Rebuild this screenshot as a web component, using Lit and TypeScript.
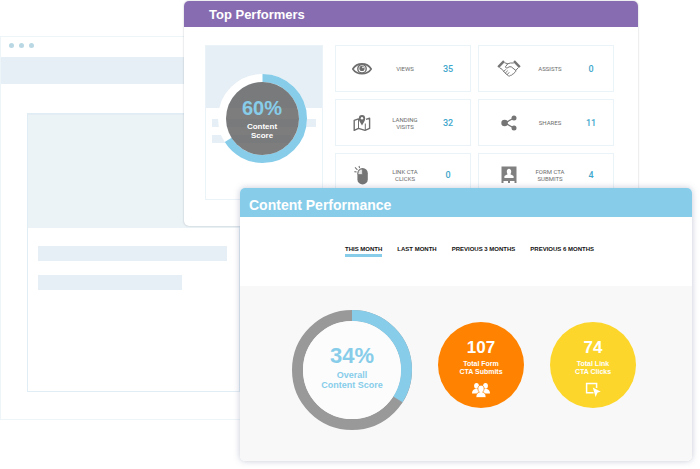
import { LitElement, html, css, svg } from "lit";
import { customElement, property } from "lit/decorators.js";

const icons: Record<string, unknown> = {
  eye: html`<svg width="20" height="14" viewBox="0 0 20 14" aria-hidden="true" fill="none" stroke="#6e6e6e">
    <path d="M0.8 7C5 0.2 15 0.2 19.2 7C15 13.4 5 13.4 0.8 7Z" stroke-width="1.6" />
    <circle cx="10" cy="6.8" r="4.2" stroke-width="1.4" />
    <circle cx="10" cy="6.4" r="2.6" fill="#6e6e6e" stroke="none" />
    <circle cx="11" cy="5.4" r="0.8" fill="#fff" stroke="none" />
  </svg>`,
  map: html`<svg width="18" height="18" viewBox="0 0 18 18" aria-hidden="true" fill="none" stroke="#6e6e6e" stroke-width="1.4">
    <path d="M5.5 4.9L1.2 6.4V16.4L5.5 14.4L12 16.4L16.6 14.4V4.2L13 5.4" stroke-linejoin="round" />
    <path d="M5.5 4.5V14M12.3 9.5V16" stroke-width="1" />
    <path d="M9 11.4C7.4 8.6 5.8 6.8 5.8 4.4A3.2 3.4 0 0 1 12.2 4.4C12.2 6.8 10.6 8.6 9 11.4Z" fill="#6e6e6e" stroke="none" />
    <circle cx="9" cy="4.3" r="1.2" fill="#fff" stroke="none" />
  </svg>`,
  mouse: html`<svg width="18" height="20" viewBox="0 0 18 20" aria-hidden="true">
    <path d="M4.4 10V8.2A5.2 5.2 0 0 1 14.8 8.2V14.4A5.2 5 0 0 1 4.4 14.4Z" fill="#757575" />
    <path d="M9.4 4V9.6H5V8.2A4.6 4.4 0 0 1 9.4 4Z" fill="#e4e4e4" stroke="#757575" stroke-width="0.8" />
    <path d="M1.4 6.6L3.6 7M2 2.4L4.4 4.8M6 1L6.6 3.2" stroke="#757575" stroke-width="1.1" />
  </svg>`,
  hands: html`<svg width="24" height="17" viewBox="0 0 24 17" aria-hidden="true" fill="none" stroke="#757575" stroke-width="1" stroke-linejoin="round" stroke-linecap="round">
    <path d="M1.2 7.2L7 1.2M22.8 7.2L17 1.2" stroke-width="2.4" stroke-linecap="butt" />
    <path d="M3 8L5.2 9.4L7.6 12.6L11.4 15.8C12.4 16.3 13.3 16 13.6 15.2C14.8 15.4 15.6 14.8 15.8 13.8C17 13.8 17.6 13 17.6 12.2C18.6 12 19 11.2 18.8 10.4L21 8" />
    <path d="M7.8 2.8L10.8 3.8L8.4 6.8C8.6 8.4 10.6 8.4 12 6.8L14.2 6.8L18.8 10.4M10.8 3.8L13.4 3L16.4 3" />
    <path d="M6.8 11.4L8.6 9.6M8.4 13L10.4 11M10.2 14.6L12 12.6" />
  </svg>`,
  share: html`<svg width="16" height="16" viewBox="0 0 16 16" aria-hidden="true" fill="#757575">
    <path d="M13 3L4 8L13 13" fill="none" stroke="#757575" stroke-width="1.3" />
    <circle cx="3.6" cy="8" r="3.3" /><circle cx="13" cy="3" r="2.5" /><circle cx="13" cy="13" r="2.5" />
  </svg>`,
  form: html`<svg width="16" height="18" viewBox="0 0 16 18" aria-hidden="true">
    <path d="M0.5 0.5H15.5V17H13.5V15H9V17H7V15H2.5V17H0.5Z" fill="#808080" />
    <path d="M3.4 12V10.2C3.6 9.2 5.6 9 6.6 8.2C5.2 6.4 5.6 2.8 8 2.8C10.4 2.8 10.8 6.4 9.4 8.2C10.4 9 12.4 9.2 12.6 10.2V12Z" fill="#fff" />
  </svg>`,
  people: html`<svg width="18" height="16" viewBox="0 0 18 16" aria-hidden="true" fill="#fff">
    <ellipse cx="4.5" cy="3.8" rx="2.4" ry="2.9" /><ellipse cx="13.5" cy="3.8" rx="2.4" ry="2.9" />
    <path d="M0 11.6C0 8.6 1.2 7.6 3.2 7H5.8L7 8V11.6Z" /><path d="M18 11.6C18 8.6 16.8 7.6 14.8 7H12.2L11 8V11.6Z" />
    <path d="M4 15.5C4 11.8 5.4 10.8 7.4 10.2C5 8 5.4 3.2 9 3.2C12.6 3.2 13 8 10.6 10.2C12.6 10.8 14 11.8 14 15.5Z" stroke="#ff8300" stroke-width="0.7" />
  </svg>`,
  click: html`<svg width="16" height="16" viewBox="0 0 16 16" aria-hidden="true">
    <path d="M8.5 10.7H1.6V1.6H11.6V6" fill="none" stroke="#fff" stroke-width="1.5" />
    <path d="M7.8 5.4L15.8 9.8L12.6 10.6L10.6 15Z" fill="#fff" />
  </svg>`,
};

@customElement("score-ring")
class ScoreRing extends LitElement {
  @property({ type: Number }) size = 100;
  @property({ type: Number }) thickness = 10;
  @property({ type: Number }) share = 0;
  @property() track = "#fff";
  @property() fill = "none";

  static styles = css`
    :host { display: grid; place-items: center; text-align: center; }
    svg, .label { grid-area: 1 / 1; }
    svg { display: block; }
  `;

  render() {
    const c = this.size / 2;
    const r = c - this.thickness / 2;
    const len = 2 * Math.PI * r;
    return html`
      <svg width=${this.size} height=${this.size} aria-hidden="true">
        <g transform="rotate(-90 ${c} ${c})" fill="none" stroke-width=${this.thickness}>
          ${svg`<circle cx=${c} cy=${c} r=${r} stroke=${this.track} />
          <circle cx=${c} cy=${c} r=${r} stroke="#87cdea" stroke-dasharray="${len * this.share} ${len}" />
          <circle cx=${c} cy=${c} r=${c - this.thickness} stroke="none" fill=${this.fill} />`}
        </g>
      </svg>
      <div class="label"><slot></slot></div>
    `;
  }
}

type Stat = { icon: string; label: string[]; value: number };

const reach: Stat[] = [
  { icon: "eye", label: ["VIEWS"], value: 35 },
  { icon: "map", label: ["LANDING", "VISITS"], value: 32 },
  { icon: "mouse", label: ["LINK CTA", "CLICKS"], value: 0 },
];
const actions: Stat[] = [
  { icon: "hands", label: ["ASSISTS"], value: 0 },
  { icon: "share", label: ["SHARES"], value: 11 },
  { icon: "form", label: ["FORM CTA", "SUBMITS"], value: 4 },
];
const periods = ["THIS MONTH", "LAST MONTH", "PREVIOUS 3 MONTHS", "PREVIOUS 6 MONTHS"];

@customElement("app-root")
class AppRoot extends LitElement {
  @property({ type: Number }) period = 0;

  static styles = css`
    :host { display: block; background: #fff; font-family: "Liberation Sans", Arial, sans-serif; }
    * { box-sizing: border-box; }
    h2, p { margin: 0; }
    .stage { display: grid; align-items: start; }
    .stage > * { grid-area: 1 / 1; min-width: 0; }

    .browser { margin: 36px 433px 0 0; border: 1px solid #edf5f9; background: #fff; }
    .dots { display: flex; gap: 5px; padding: 6px 8px; height: 20px; }
    .dot { width: 5px; height: 5px; border-radius: 50%; background: #b9d8e4; }
    .address { height: 27px; background: #e6eff5; }
    .page { margin: 29px 26px 27px; height: 279px; border: 1px solid #e1edf4; }
    .hero { height: 114px; background: #ebf3f7; border-top: 1px solid #e3edf3; }
    .lines { display: grid; gap: 14px; padding: 18px 12px 18px 10px; }
    .line { height: 15px; background: #e6eff5; }
    .line.short { width: 76%; }

    .panel { background: #fff; border-radius: 5px; overflow: hidden; }
    .panel h2 { color: #fff; font-weight: bold; }
    .performers { margin: 1px 62px 0 184px; box-shadow: 0 0 2px rgba(60, 70, 90, 0.35); }
    .performers h2 { background: #886cb1; font-size: 13px; line-height: 26px; padding: 1px 25px 0; height: 26px; }
    .board { display: flex; gap: 12px; padding: 18px 24px 26px 21px; }
    .tile {
      display: grid; justify-items: center; align-items: start; flex: none; width: 118px; height: 155px;
      border: 1px solid #eaf3f8;
    }
    .tile > * { grid-area: 1 / 1; }
    .sheet { width: 100%; }
    .cover { height: 62px; background: #e6eff5; }
    .rows { display: grid; gap: 8px; padding: 11px 6px; }
    .row { height: 8px; background: #e6eff5; }
    .row.short { width: 76%; }
    .tile score-ring { margin: 28px 4px 0 0; }
    .percent { color: #87cdea; font-size: 20px; line-height: 22px; font-weight: bold; }
    .percent-note { color: #fff; font-size: 8px; line-height: 9px; font-weight: bold; padding-top: 3px; }
    .stats { flex: 1; display: grid; grid-template-columns: 1fr 1fr; gap: 7px; }
    .column { display: grid; gap: 7px; align-content: start; }
    .stat {
      display: grid; grid-template-columns: 52px 1fr 44px; align-items: center; height: 47px;
      border: 1px solid #e9f3f8; text-align: center; font-family: Roboto, sans-serif;
    }
    .stat:last-child { height: 44px; }
    .actions .stat { padding-left: 4px; }
    .stat svg { display: block; margin: 0 auto; }
    .stat-label { color: #6c6c6c; font-size: 6px; line-height: 7px; padding-right: 4px; white-space: nowrap; }
    .stat-value { color: #3fa7cc; font-size: 9px; line-height: 12px; font-weight: 500; }

    .content { margin: 188px 8px 8px 240px; box-shadow: 0 0 6px rgba(90, 100, 140, 0.35); }
    .content h2 { background: #87cdea; font-size: 14px; line-height: 29px; padding: 3px 9px 0; height: 29px; }
    .tabs { display: flex; justify-content: center; gap: 15px; height: 69px; padding: 28px 0 0 7px; }
    .tab {
      align-self: start; background: none; border: 0; border-bottom: 3px solid transparent; padding: 0;
      font: bold 6px/9px "Liberation Sans", Arial, sans-serif; color: #111; white-space: nowrap; cursor: pointer;
    }
    .tab.active { border-color: #87cdea; }
    .scores { display: flex; justify-content: center; gap: 26px; background: #f8f8f8; padding: 24px 4px 31px 0; }
    .overall { font-size: 9px; line-height: 10px; font-weight: bold; color: #87cdea; padding-bottom: 8px; }
    .overall .percent { font-size: 22px; line-height: 28px; }
    .badge {
      display: grid; justify-items: center; align-content: start; margin-top: 12px; width: 86px; height: 86px;
      border-radius: 50%; color: #fff; font-weight: bold; text-align: center; padding-top: 16px;
    }
    .badge.submits { background: #ff8300; }
    .badge.clicks { background: #fcd62a; }
    .count { font-size: 17px; line-height: 20px; }
    .note { font-size: 7px; line-height: 8px; padding: 2px 0 6px; }
  `;

  private column(stats: Stat[], name: string) {
    return html`<div class="column ${name}">
      ${stats.map((s) => html`<div class="stat">
        ${icons[s.icon]}
        <div class="stat-label">${s.label.map((l) => html`<div>${l}</div>`)}</div>
        <div class="stat-value">${s.value}</div>
      </div>`)}
    </div>`;
  }

  render() {
    return html`<main class="stage">
      <div class="browser" aria-hidden="true">
        <div class="dots"><span class="dot"></span><span class="dot"></span><span class="dot"></span></div>
        <div class="address"></div>
        <div class="page">
          <div class="hero"></div>
          <div class="lines"><div class="line"></div><div class="line short"></div></div>
        </div>
      </div>

      <section class="panel performers">
        <h2>Top Performers</h2>
        <div class="board">
          <div class="tile">
            <div class="sheet">
              <div class="cover"></div>
              <div class="rows"><div class="row"></div><div class="row short"></div></div>
            </div>
            <score-ring size="89" thickness="8" share="0.66" track="#fff" fill="rgba(92, 92, 92, 0.8)">
              <p class="percent">60%</p>
              <p class="percent-note">Content<br />Score</p>
            </score-ring>
          </div>
          <div class="stats">${this.column(reach, "reach")}${this.column(actions, "actions")}</div>
        </div>
      </section>

      <section class="panel content">
        <h2>Content Performance</h2>
        <nav class="tabs">
          ${periods.map((p, i) => html`<button
            class="tab ${i === this.period ? "active" : ""}"
            @click=${() => (this.period = i)}>${p}</button>`)}
        </nav>
        <div class="scores">
          <score-ring size="120" thickness="11" share="0.34" track="#999" fill="#fcfcfc">
            <div class="overall"><p class="percent">34%</p><p>Overall<br />Content Score</p></div>
          </score-ring>
          <div class="badge submits">
            <p class="count">107</p><p class="note">Total Form<br />CTA Submits</p>${icons.people}
          </div>
          <div class="badge clicks">
            <p class="count">74</p><p class="note">Total Link<br />CTA Clicks</p>${icons.click}
          </div>
        </div>
      </section>
    </main>`;
  }
}
